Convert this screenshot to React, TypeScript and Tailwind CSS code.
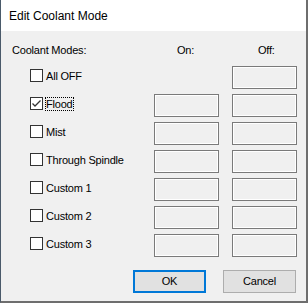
import React from "react";

const rows: { label: string; checked: boolean; on: boolean; focus?: boolean }[] = [
  { label: "All OFF", checked: false, on: false },
  { label: "Flood", checked: true, on: true, focus: true },
  { label: "Mist", checked: false, on: true },
  { label: "Through Spindle", checked: false, on: true },
  { label: "Custom 1", checked: false, on: true },
  { label: "Custom 2", checked: false, on: true },
  { label: "Custom 3", checked: false, on: true },
];

function Box() {
  return (
    <div className="h-[23px] w-[65px] border border-[#7a7a7a] bg-[#f0f0f0] shadow-[inset_0_0_0_1px_#ffffff]" />
  );
}

function Check({ checked }: { checked: boolean }) {
  return (
    <div className="mt-[3px] flex h-[13px] w-[13px] shrink-0 items-center justify-center border border-[#333333] bg-white">
      {checked && (
        <svg width="11" height="11" viewBox="0 0 11 11">
          <path d="M1.5 5.5 L4 8 L9.5 2.5" fill="none" stroke="#333333" strokeWidth="1.3" />
        </svg>
      )}
    </div>
  );
}

export default function App() {
  return (
    <div className="flex h-[303px] w-[308px] flex-col border-l border-r-2 border-b-2 border-l-[#4a5a6a] border-r-[#6e6e6e] border-b-[#6e6e6e] font-['Liberation_Sans',Arial,sans-serif] text-[11px] tracking-[-0.2px] text-black">
      <div className="flex h-[31px] shrink-0 items-center bg-white pl-[8px] text-[12px] leading-none tracking-normal">
        Edit Coolant Mode
      </div>
      <div className="flex flex-1 flex-col bg-[#f0f0f0] pt-[11px]">
        <div className="flex h-[16px] items-center leading-none">
          <div className="w-[153px] pl-[11px]">Coolant Modes:</div>
          <div className="w-[78px] pl-[23px]">On:</div>
          <div className="pl-[26px]">Off:</div>
        </div>
        <div className="mt-[8px] flex flex-col gap-[5px]">
          {rows.map((r) => (
            <div key={r.label} className="flex h-[23px]">
              <div className="flex w-[153px] items-start pl-[29px]">
                <Check checked={r.checked} />
                <div
                  className={
                    "ml-[2px] mt-[3px] flex h-[14px] items-center px-[1px] leading-none " +
                    (r.focus ? "outline outline-1 outline-dotted outline-black -outline-offset-1" : "")
                  }
                >
                  {r.label}
                </div>
              </div>
              <div className="w-[78px]">{r.on && <Box />}</div>
              <Box />
            </div>
          ))}
        </div>
        <div className="mt-[13px] flex justify-end gap-[17px] pr-[10px]">
          <button className="flex h-[23px] w-[73px] items-center justify-center border-2 border-[#0078d7] bg-[#e1e1e1] text-[11px] leading-none">
            OK
          </button>
          <button className="flex h-[23px] w-[73px] items-center justify-center border border-[#adadad] bg-[#e1e1e1] text-[11px] leading-none">
            Cancel
          </button>
        </div>
      </div>
    </div>
  );
}
